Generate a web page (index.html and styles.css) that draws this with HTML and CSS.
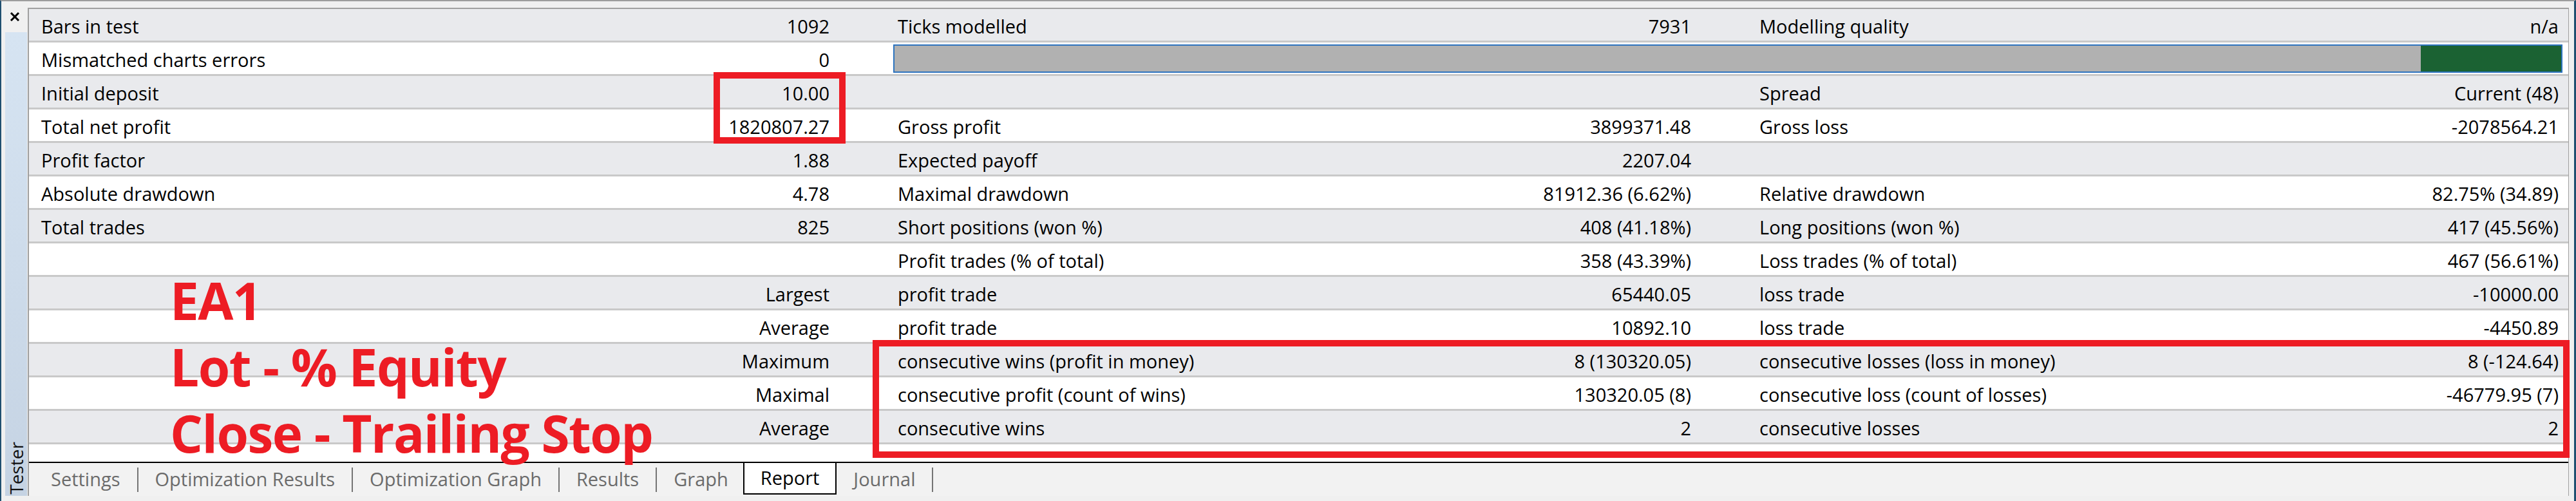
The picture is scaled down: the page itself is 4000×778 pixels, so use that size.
FILE: index.html
```html
<!DOCTYPE html>
<html lang="en">
<head>
  <meta charset="UTF-8" />
  <title>Tester - Report</title>
  <link rel="stylesheet" href="styles.css">
</head>
<body>
  <div class="window">
    <aside class="side">
      <div class="close">
        <svg width="16" height="14" viewBox="0 0 16 14"><path d="M2 1 L14 13 M14 1 L2 13" stroke="#000" stroke-width="3"/></svg>
      </div>
      <div class="side-tab"><span>Tester</span></div>
    </aside>

    <div class="panel">
      <div class="report">
        <div class="row">
          <div class="pair first"><span>Bars in test</span><span>1092</span></div>
          <div class="pair"><span>Ticks modelled</span><span>7931</span></div>
          <div class="pair last"><span>Modelling quality</span><span>n/a</span></div>
        </div>
        <div class="row">
          <div class="pair first"><span>Mismatched charts errors</span><span>0</span></div>
          <div class="quality">
            <div class="quality-bar"><div class="quality-fill"></div></div>
          </div>
        </div>
        <div class="row">
          <div class="pair first"><span>Initial deposit</span><span>10.00</span></div>
          <div class="pair"><span></span><span></span></div>
          <div class="pair last"><span>Spread</span><span>Current (48)</span></div>
        </div>
        <div class="row">
          <div class="pair first"><span>Total net profit</span><span>1820807.27</span></div>
          <div class="pair"><span>Gross profit</span><span>3899371.48</span></div>
          <div class="pair last"><span>Gross loss</span><span>-2078564.21</span></div>
        </div>
        <div class="row">
          <div class="pair first"><span>Profit factor</span><span>1.88</span></div>
          <div class="pair"><span>Expected payoff</span><span>2207.04</span></div>
          <div class="pair last"><span></span><span></span></div>
        </div>
        <div class="row">
          <div class="pair first"><span>Absolute drawdown</span><span>4.78</span></div>
          <div class="pair"><span>Maximal drawdown</span><span>81912.36 (6.62%)</span></div>
          <div class="pair last"><span>Relative drawdown</span><span>82.75% (34.89)</span></div>
        </div>
        <div class="row">
          <div class="pair first"><span>Total trades</span><span>825</span></div>
          <div class="pair"><span>Short positions (won %)</span><span>408 (41.18%)</span></div>
          <div class="pair last"><span>Long positions (won %)</span><span>417 (45.56%)</span></div>
        </div>
        <div class="row">
          <div class="pair first"><span></span><span></span></div>
          <div class="pair"><span>Profit trades (% of total)</span><span>358 (43.39%)</span></div>
          <div class="pair last"><span>Loss trades (% of total)</span><span>467 (56.61%)</span></div>
        </div>
        <div class="row">
          <div class="pair first"><span></span><span>Largest</span></div>
          <div class="pair"><span>profit trade</span><span>65440.05</span></div>
          <div class="pair last"><span>loss trade</span><span>-10000.00</span></div>
        </div>
        <div class="row">
          <div class="pair first"><span></span><span>Average</span></div>
          <div class="pair"><span>profit trade</span><span>10892.10</span></div>
          <div class="pair last"><span>loss trade</span><span>-4450.89</span></div>
        </div>
        <div class="row">
          <div class="pair first"><span></span><span>Maximum</span></div>
          <div class="pair"><span>consecutive wins (profit in money)</span><span>8 (130320.05)</span></div>
          <div class="pair last"><span>consecutive losses (loss in money)</span><span>8 (-124.64)</span></div>
        </div>
        <div class="row">
          <div class="pair first"><span></span><span>Maximal</span></div>
          <div class="pair"><span>consecutive profit (count of wins)</span><span>130320.05 (8)</span></div>
          <div class="pair last"><span>consecutive loss (count of losses)</span><span>-46779.95 (7)</span></div>
        </div>
        <div class="row">
          <div class="pair first"><span></span><span>Average</span></div>
          <div class="pair"><span>consecutive wins</span><span>2</span></div>
          <div class="pair last"><span>consecutive losses</span><span>2</span></div>
        </div>
      </div>

      <nav class="tabs">
        <span class="tab">Settings</span>
        <span class="tab">Optimization Results</span>
        <span class="tab">Optimization Graph</span>
        <span class="tab">Results</span>
        <span class="tab before-active">Graph</span>
        <span class="tab active">Report</span>
        <span class="tab">Journal</span>
      </nav>
    </div>

    <!-- annotations drawn over the report -->
    <div class="mark mark-deposit"></div>
    <div class="mark mark-streaks"></div>
    <div class="note">EA1<br>Lot - % Equity<br>Close - Trailing Stop</div>
  </div>
</body>
</html>
```

FILE: styles.css
```css
* {
  box-sizing: border-box;
}
body {
  margin: 0;
  font-family: 'Open Sans', 'Noto Sans', sans-serif;
  background: #f0f0f0;
}
.window {
  position: relative;
  width: 4000px;
  height: 778px;
  display: flex;
  padding: 10px 0 8px 0;
  background: #f0f0f0;
  border-top: 2px solid #9d9d9d;
  border-left: 2px solid #1f4f70;
  border-right: 3px solid #1f4f70;
}
.side {
  width: 41px;
  display: flex;
  flex-direction: column;
  padding-left: 6px;
}
.close {
  height: 38px;
  padding: 7px 0 0 7px;
}
.close svg {
  display: block;
}
.side-tab {
  flex: 1;
  width: 34px;
  background: linear-gradient(#d6e4f2, #c5d3e3);
  display: flex;
  flex-direction: column;
  justify-content: flex-end;
  align-items: center;
  padding-bottom: 2px;
}
.side-tab span {
  writing-mode: vertical-rl;
  transform: rotate(180deg);
  font-size: 28px;
  line-height: 28px;
  color: #111;
}
.panel {
  flex: 1;
  margin-right: 8px;
  display: flex;
  flex-direction: column;
  background: #fff;
  border-top: 2px solid #a0a0a0;
  border-left: 2px solid #a0a0a0;
  border-right: 1px solid #a0a0a0;
}
.report {
  height: 703px;
  font-size: 29px;
  color: #000;
}
.row {
  display: grid;
  grid-template-columns: 1255px 1338px 1fr;
  height: 52px;
  border-bottom: 3px solid #c9c9c9;
  background: #fff;
}
.row:nth-child(odd) {
  background: #e9eaed;
}
.pair {
  display: flex;
  justify-content: space-between;
  align-items: center;
  padding: 4px 12px 0 94px;
  white-space: nowrap;
}
.pair.first {
  padding-left: 19px;
}
.pair.last {
  padding-right: 15px;
}
.quality {
  grid-column: 2 / 4;
  padding: 3px 9px 2px 87px;
}
.quality-bar {
  height: 100%;
  display: flex;
  justify-content: flex-end;
  border: 2px solid #2e74bf;
  background: #b1b1b1;
}
.quality-fill {
  width: 218px;
  background: #1b6233;
}
.tabs {
  display: flex;
  align-items: center;
  height: 53px;
  padding-left: 8px;
  border-top: 2px solid #000;
  background: #f2f2f2;
  font-size: 29px;
  color: #6b6b6b;
}
.tab {
  height: 38px;
  line-height: 36px;
  padding: 0 26px;
  border-right: 2px solid #747474;
  white-space: nowrap;
}
.tab.before-active {
  border-right: none;
  padding-right: 23px;
}
.tab.active {
  align-self: flex-start;
  height: 51px;
  margin-top: -2px;
  line-height: 46px;
  padding: 0 25px;
  border: 2px solid #000;
  background: #fff;
  color: #000;
}
.mark {
  position: absolute;
  border: 10px solid #ed1c24;
}
.mark-deposit {
  left: 1106px;
  top: 110px;
  width: 205px;
  height: 111px;
}
.mark-streaks {
  left: 1353px;
  top: 526px;
  width: 2635px;
  height: 183px;
}
.note {
  position: absolute;
  left: 262px;
  top: 412px;
  font-size: 80px;
  line-height: 103px;
  font-weight: 700;
  letter-spacing: -1.5px;
  color: #ed1c24;
  white-space: nowrap;
}
```
